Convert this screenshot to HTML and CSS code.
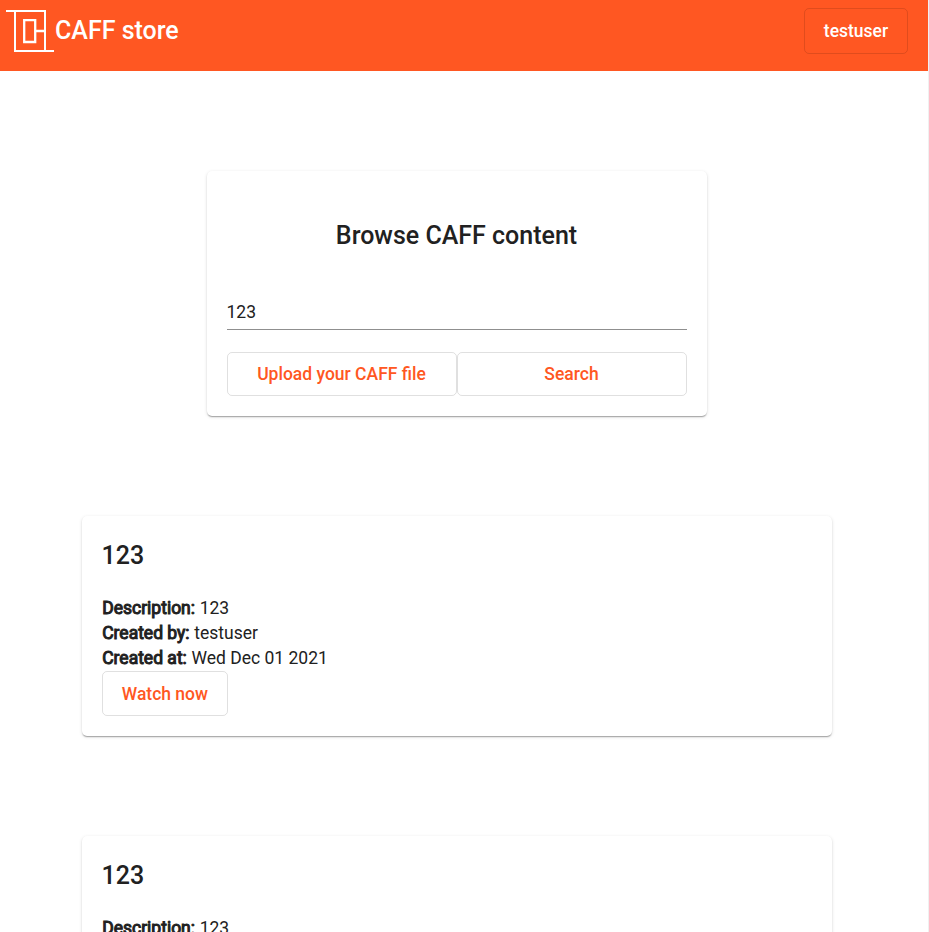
FILE: index.html
```html
<!DOCTYPE html>
<html lang="en">
<head>
<meta charset="utf-8">
<title>CAFF store</title>
<link rel="stylesheet" href="styles.css">
</head>
<body>
<div class="page">
  <header class="toolbar">
    <svg class="logo" width="60" height="60" viewBox="0 0 60 60" fill="none" stroke="#fff" stroke-width="2">
      <path d="M6 11H45V51M15 11V51H54"/>
      <path d="M24.2 20.2H35.2V42H24.2ZM35 31H45" stroke-width="2.3"/>
    </svg>
    <span class="brand">CAFF store</span>
    <button class="btn user">testuser</button>
  </header>
  <main>
    <section class="card search">
      <h1>Browse CAFF content</h1>
      <input class="query" type="text" value="123" aria-label="Search text">
      <div class="actions">
        <button class="btn">Upload your CAFF file</button>
        <button class="btn">Search</button>
      </div>
    </section>
    <article class="card result">
      <h2>123</h2>
      <p><b>Description:</b> 123</p>
      <p><b>Created by:</b> testuser</p>
      <p><b>Created at:</b> Wed Dec 01 2021</p>
      <button class="btn watch">Watch now</button>
    </article>
    <article class="card result">
      <h2>123</h2>
      <p><b>Description:</b> 123</p>
      <p><b>Created by:</b> testuser</p>
      <p><b>Created at:</b> Wed Dec 01 2021</p>
      <button class="btn watch">Watch now</button>
    </article>
  </main>
</div>
</body>
</html>
```
FILE: styles.css
```css
* { box-sizing: border-box; }
html, body { height: 100%; }
body {
  margin: 0;
  overflow: hidden;
  background: #fff;
  color: #212121;
  font: 400 17.5px/25px Roboto, sans-serif;
}
.page {
  height: 100%;
  overflow: hidden;
  border-right: 1px solid #f0f0f0;
}
.toolbar {
  display: flex;
  align-items: flex-start;
  height: 71px;
  padding-right: 20px;
  background: #ff5722;
  color: #fff;
}
.logo { flex: none; margin-right: -5px; }
.brand { font: 500 25px/40px Roboto, sans-serif; padding-top: 11px; }
main { width: 913px; }
.card {
  margin: 0 auto 100px;
  padding: 20px;
  border-radius: 5px;
  background: #fff;
  box-shadow: 0 2px 1.25px -1px rgba(0,0,0,.2), 0 1px 1.25px 0 rgba(0,0,0,.14), 0 1px 3.75px 0 rgba(0,0,0,.12);
}
.search { width: 500px; height: 245px; margin-top: 100px; }
h1, h2 { margin: 0; font-size: 25px; font-weight: 500; line-height: 40px; }
h1 { padding-top: 25px; text-align: center; }
.query {
  display: block;
  width: 100%;
  height: 36px;
  margin-top: 38px;
  padding: 1px 0 0;
  border: 0;
  border-bottom: 1px solid #8f8f8f;
  background: none;
  color: inherit;
  font: inherit;
  outline: none;
}
.actions { display: flex; margin-top: 22px; }
.actions .btn { flex: 1; height: 44px; padding: 0; }
.btn {
  height: 45px;
  padding: 0 18.75px;
  border: 1px solid rgba(0,0,0,.12);
  border-radius: 5px;
  background: transparent;
  color: #ff5722;
  font: 500 17.5px/42px Roboto, sans-serif;
}
.user { width: 104px; height: 46px; margin: 8px 0 0 auto; padding: 0; color: #fff; }
.result { width: 750px; height: 220px; }
h2 { margin-bottom: 20px; }
p { margin: 0; }
b { margin: 0 .3px 0 .7px; font-weight: 400; -webkit-text-stroke: 1px currentColor; }
.watch { display: block; width: 126px; padding: 0 0 0 .8px; }
```
